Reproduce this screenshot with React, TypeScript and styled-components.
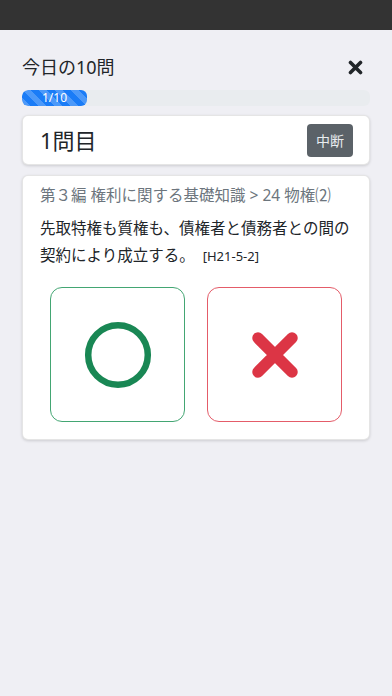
import React from "react";
import styled, { createGlobalStyle } from "styled-components";

const Global = createGlobalStyle`
  html, body { margin: 0; padding: 0; background: #efeff4; }
  body { font-family: "Noto Sans", "Noto Sans CJK JP", sans-serif; color: #212529; }
  * { box-sizing: border-box; }
`;

const Page = styled.div`
  min-height: 696px;
  background: #efeff4;
  display: flex;
  flex-direction: column;
`;

const StatusBar = styled.div`
  height: 30px;
  background: #333333;
`;

const Content = styled.div`
  padding: 24px 22px 0 22px;
  display: flex;
  flex-direction: column;
`;

const Header = styled.div`
  display: flex;
  align-items: center;
  justify-content: space-between;
  height: 27px;
  margin-bottom: 9px;
`;

const Title = styled.h1`
  margin: 0;
  font-size: 18px;
  font-weight: 400;
  line-height: 27px;
  color: #212529;
`;

const CloseButton = styled.button`
  border: none;
  background: none;
  padding: 0;
  margin-right: 7px;
  width: 16px;
  height: 16px;
  display: flex;
  align-items: center;
  justify-content: center;
`;

const Track = styled.div`
  height: 16px;
  border-radius: 6px;
  background: #e9ecef;
  overflow: hidden;
  display: flex;
  margin-bottom: 9px;
`;

const Fill = styled.div`
  height: 100%;
  border-radius: 6px;
  background-color: #1a7cf7;
  background-image: linear-gradient(
    45deg,
    rgba(255, 255, 255, 0.22) 25%,
    transparent 25%,
    transparent 50%,
    rgba(255, 255, 255, 0.22) 50%,
    rgba(255, 255, 255, 0.22) 75%,
    transparent 75%,
    transparent
  );
  background-size: 16px 16px;
  color: #fff;
  font-size: 12px;
  line-height: 16px;
  text-align: center;
`;

const Card = styled.div<{ $gap?: number }>`
  background: #fff;
  border: 1px solid rgba(0, 0, 0, 0.1);
  border-radius: 6px;
  box-shadow: 0 1px 3px rgba(0, 0, 0, 0.15);
  margin-bottom: ${(p) => p.$gap ?? 10}px;
`;

const QuestionHead = styled(Card)`
  height: 50px;
  display: flex;
  align-items: center;
  justify-content: space-between;
  padding: 0 16px 0 17px;
`;

const Number = styled.div`
  font-size: 22px;
  line-height: 30px;
  color: #212529;
`;

const PauseButton = styled.button`
  width: 46px;
  height: 33px;
  border: none;
  border-radius: 4px;
  background: #5b6268;
  color: #e9ecef;
  font-family: inherit;
  font-size: 14px;
  padding: 0;
`;

const QuestionBody = styled(Card)`
  padding: 8px 17px 17px 17px;
  display: flex;
  flex-direction: column;
`;

const Category = styled.div`
  font-size: 15.5px;
  line-height: 22px;
  color: #6c757d;
  margin-bottom: 9px;
`;

const Question = styled.p`
  margin: 0;
  font-size: 15.5px;
  line-height: 27px;
  color: #212529;
`;

const Ref = styled.span`
  font-size: 13px;
  margin-left: 8px;
`;

const Choices = styled.div`
  display: flex;
  justify-content: center;
  gap: 22px;
  margin-top: 17px;
`;

const Choice = styled.button<{ $color: string }>`
  width: 135px;
  height: 135px;
  border: 1px solid ${(p) => p.$color};
  border-radius: 12px;
  background: #fff;
  display: flex;
  align-items: center;
  justify-content: center;
  padding: 0;
`;

export default function App() {
  return (
    <>
      <Global />
      <Page>
        <StatusBar />
        <Content>
          <Header>
            <Title>今日の10問</Title>
            <CloseButton aria-label="close">
              <svg width="15" height="15" viewBox="0 0 15 15">
                <path
                  d="M2.5 2.5 L12.5 12.5 M12.5 2.5 L2.5 12.5"
                  stroke="#212529"
                  strokeWidth="3.6"
                  strokeLinecap="round"
                />
              </svg>
            </CloseButton>
          </Header>
          <Track>
            <Fill style={{ width: "65px" }}>1/10</Fill>
          </Track>
          <QuestionHead>
            <Number>1問目</Number>
            <PauseButton>中断</PauseButton>
          </QuestionHead>
          <QuestionBody>
            <Category>第３編 権利に関する基礎知識 &gt; 24 物権⑵</Category>
            <Question>
              先取特権も質権も、債権者と債務者との間の契約により成立する。
              <Ref>[H21-5-2]</Ref>
            </Question>
            <Choices>
              <Choice $color="#43a673" aria-label="正しい">
                <svg width="68" height="68" viewBox="0 0 68 68">
                  <circle cx="34" cy="34" r="29.8" fill="none" stroke="#198754" strokeWidth="6.5" />
                </svg>
              </Choice>
              <Choice $color="#e45c69" aria-label="誤り">
                <svg width="48" height="48" viewBox="0 0 48 48">
                  <path
                    d="M7 7 L41 41 M41 7 L7 41"
                    stroke="#dc3545"
                    strokeWidth="11.5"
                    strokeLinecap="round"
                  />
                </svg>
              </Choice>
            </Choices>
          </QuestionBody>
        </Content>
      </Page>
    </>
  );
}
